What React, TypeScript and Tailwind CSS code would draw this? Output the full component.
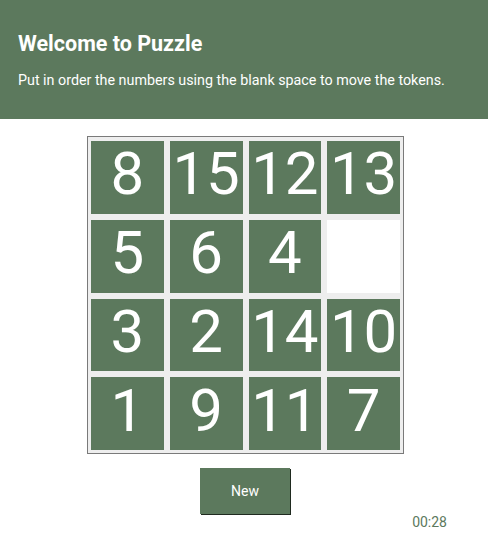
import React from 'react';

const tiles: (number | null)[] = [8, 15, 12, 13, 5, 6, 4, null, 3, 2, 14, 10, 1, 9, 11, 7];

export default function App() {
  return (
    <div className="min-h-[557px] bg-white font-['Roboto',sans-serif]">
      <header className="h-[119px] bg-[#5c795d] px-[18px] pt-[30px] text-white">
        <h1 className="text-[21.5px] font-bold leading-[28px]">Welcome to Puzzle</h1>
        <p className="mt-[12px] text-[14.3px] leading-[20px]">
          Put in order the numbers using the blank space to move the tokens.
        </p>
      </header>

      <div className="mt-[17px] flex flex-col items-center">
        <div className="ml-[3px] grid w-[317px] grid-cols-4 gap-[6px] border border-[#7a7a7a] bg-[#eeeeee] p-[3px] pt-[4px]">
          {tiles.map((n, i) => (
            <div
              key={i}
              className={
                n === null
                  ? 'flex aspect-square items-center justify-center bg-white'
                  : 'flex aspect-square items-center justify-center bg-[#5c795d] text-[60px] leading-none text-white'
              }
            >
              <span className="-mt-[6px]">{n}</span>
            </div>
          ))}
        </div>

        <button className="ml-[2px] mt-[14px] h-[46px] w-[90px] bg-[#5c795d] text-[14px] text-white shadow-[1px_1px_0_#1f2a1f]">
          New
        </button>
      </div>

      <div className="-mt-[2px] pr-[41px] text-right text-[14px] leading-[20px] text-[#5c795d]">00:28</div>
    </div>
  );
}
